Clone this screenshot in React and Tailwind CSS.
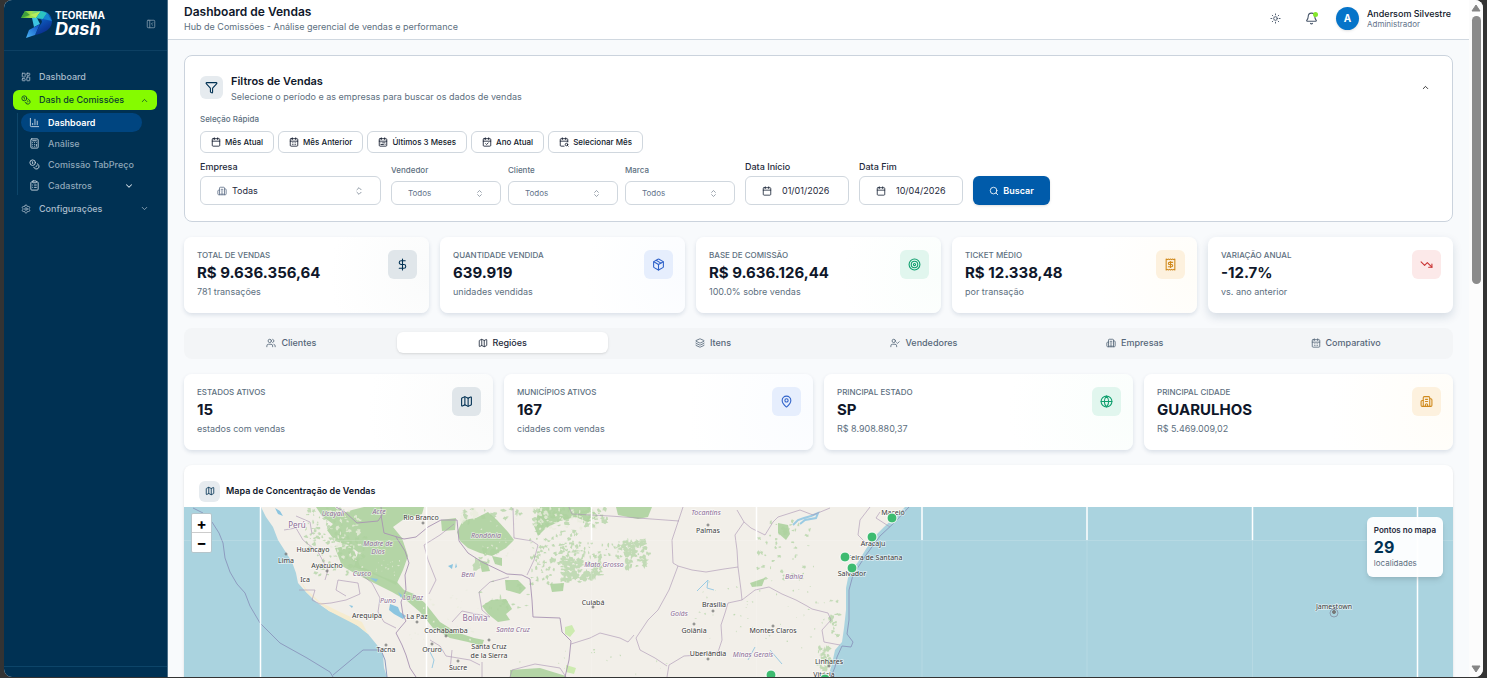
import {
  Building2,
  Calculator,
  Calendar,
  CalendarCheck,
  CalendarDays,
  CalendarRange,
  CalendarSearch,
  ChartColumn,
  ChevronDown,
  ChevronUp,
  ChevronsUpDown,
  ClipboardList,
  Coins,
  DollarSign,
  Funnel,
  Globe,
  Layers,
  LayoutDashboard,
  Map as MapIcon,
  MapPin,
  Package,
  PanelLeftClose,
  Bell,
  Receipt,
  Search,
  Settings,
  Sun,
  Target,
  TrendingDown,
  UserCheck,
  Users,
} from "lucide-react";

const tones = {
  navy: {
    icon: "bg-[#e0e6ea] text-[#003153]",
    card: "bg-[radial-gradient(circle_at_100%_50%,#fafbfb,#ffffff_40%)]",
  },
  blue: {
    icon: "bg-[#e6eefd] text-[#2f62c9]",
    card: "bg-[radial-gradient(circle_at_100%_50%,#fafcff,#ffffff_40%)]",
  },
  green: {
    icon: "bg-[#e1f6ee] text-[#0f9f6e]",
    card: "bg-[radial-gradient(circle_at_100%_50%,#fafefc,#ffffff_40%)]",
  },
  amber: {
    icon: "bg-[#fdf1de] text-[#d08a1d]",
    card: "bg-[radial-gradient(circle_at_100%_50%,#fffdf8,#ffffff_40%)]",
  },
  red: {
    icon: "bg-[#fce9e9] text-[#c93434]",
    card: "bg-white",
  },
};

const salesStats = [
  { label: "TOTAL DE VENDAS", value: "R$ 9.636.356,64", note: "781 transações", icon: DollarSign, tone: "navy" },
  { label: "QUANTIDADE VENDIDA", value: "639.919", note: "unidades vendidas", icon: Package, tone: "blue" },
  { label: "BASE DE COMISSÃO", value: "R$ 9.636.126,44", note: "100.0% sobre vendas", icon: Target, tone: "green" },
  { label: "TICKET MÉDIO", value: "R$ 12.338,48", note: "por transação", icon: Receipt, tone: "amber" },
  { label: "VARIAÇÃO ANUAL", value: "-12.7%", note: "vs. ano anterior", icon: TrendingDown, tone: "red", raised: true },
];

const regionStats = [
  { label: "ESTADOS ATIVOS", value: "15", note: "estados com vendas", icon: MapIcon, tone: "navy" },
  { label: "MUNICÍPIOS ATIVOS", value: "167", note: "cidades com vendas", icon: MapPin, tone: "blue" },
  { label: "PRINCIPAL ESTADO", value: "SP", note: "R$ 8.908.880,37", icon: Globe, tone: "green" },
  { label: "PRINCIPAL CIDADE", value: "GUARULHOS", note: "R$ 5.469.009,02", icon: Building2, tone: "amber" },
];

const quickRanges = [
  { label: "Mês Atual", icon: Calendar },
  { label: "Mês Anterior", icon: CalendarDays },
  { label: "Últimos 3 Meses", icon: CalendarRange },
  { label: "Ano Atual", icon: CalendarCheck },
  { label: "Selecionar Mês", icon: CalendarSearch },
];

const tabs = [
  { label: "Clientes", icon: Users },
  { label: "Regiões", icon: MapIcon, active: true },
  { label: "Itens", icon: Layers },
  { label: "Vendedores", icon: UserCheck },
  { label: "Empresas", icon: Building2 },
  { label: "Comparativo", icon: CalendarDays },
];

function Logo() {
  return (
    <a href="#" aria-label="Teorema Dash" className="flex items-center gap-[3px]">
      <svg width="31" height="28" viewBox="0 0 31 28">
        <defs>
          <linearGradient id="lgTop" x1="0" y1="0" x2="1" y2="0">
            <stop offset="0" stopColor="#3fae3a" />
            <stop offset="0.5" stopColor="#a6e04a" />
            <stop offset="1" stopColor="#35c3b4" />
          </linearGradient>
          <linearGradient id="lgBow" x1="0" y1="0" x2="0.4" y2="1">
            <stop offset="0" stopColor="#22a7d8" />
            <stop offset="0.5" stopColor="#0d55b8" />
            <stop offset="1" stopColor="#0a2e8c" />
          </linearGradient>
          <linearGradient id="lgTail" x1="1" y1="0" x2="0" y2="1">
            <stop offset="0" stopColor="#0a46c0" />
            <stop offset="1" stopColor="#4ab6f5" />
          </linearGradient>
        </defs>
        <path d="M4 1 L20 1 L15 8 L0 8 Z" fill="url(#lgTop)" />
        <path d="M4 1 L9 5 L0 8 Z" fill="#3f9f3c" />
        <path d="M9 5 L20 1 L15 8 Z" fill="#b9ec5c" />
        <path d="M20 1 C27 1 31 6 31 12 C30 20 23 23 14 25 L19 15 C22 12 22 9 15 8 Z" fill="url(#lgBow)" />
        <path d="M20 1 L26 3 L22 9 L15 8 Z" fill="#2cc4c0" />
        <path d="M26 3 L31 11 L22 9 Z" fill="#1583cf" />
        <path d="M11 8 L16 8 L19 14 L13 17 Z" fill="#3cc3e2" />
        <path d="M19 14 L14 25 L5 28 L8 20 Z" fill="url(#lgTail)" />
      </svg>
      <span className="flex flex-col text-white">
        <span className="text-[10px] leading-[10px] font-bold">TEOREMA</span>
        <span className="text-[18px] leading-[18px] font-bold italic">Dash</span>
      </span>
    </a>
  );
}

function SubItem({ icon: Icon, label, active, expandable }) {
  return (
    <li>
      <a
        href="#"
        className={`flex h-[19px] items-center gap-2 rounded-full px-2 ${
          active ? "bg-[#004580] font-semibold text-white" : "font-medium text-[#8fa7b9]"
        }`}
      >
        <Icon size={11} strokeWidth={2} className="shrink-0 text-[#c9d6e0]" />
        <span className="flex-1 whitespace-nowrap">{label}</span>
        {expandable && <ChevronDown size={10} strokeWidth={2.5} className="text-[#d5e0e8]" />}
      </a>
    </li>
  );
}

function Sidebar() {
  return (
    <aside className="flex w-[164px] shrink-0 flex-col border-r border-[#4d7089] bg-[#003153] text-[9px]">
      <div className="flex h-[51px] items-center justify-between border-b border-[#0d4063] pr-[11px] pb-[2px] pl-[17px]">
        <Logo />
        <button aria-label="Recolher menu" className="text-[#7d97aa]">
          <PanelLeftClose size={10} />
        </button>
      </div>

      <nav className="flex-1 pt-4 pr-[10px] pl-[9px]">
        <a href="#" className="flex h-[19px] items-center gap-2 px-2 font-medium text-[#a9bccb]">
          <LayoutDashboard size={10} />
          Dashboard
        </a>
        <button className="mt-1 flex h-5 w-full items-center gap-2 rounded-md bg-[#85fb00] px-2 font-medium text-[#08402f]">
          <Coins size={10} />
          <span className="flex-1 text-left">Dash de Comissões</span>
          <ChevronUp size={9} />
        </button>
        <ul className="mt-[3px] ml-1 flex w-[125px] flex-col gap-[2px] border-l border-[#0d4569] pl-[3px]">
          <SubItem icon={ChartColumn} label="Dashboard" active />
          <SubItem icon={Calculator} label="Análise" />
          <SubItem icon={Coins} label="Comissão TabPreço" />
          <SubItem icon={ClipboardList} label="Cadastros" expandable />
        </ul>
        <button className="mt-1 flex h-[19px] w-full items-center gap-2 px-2 font-medium text-[#a9bccb]">
          <Settings size={10} />
          <span className="flex-1 text-left">Configurações</span>
          <ChevronDown size={9} />
        </button>
      </nav>

      <div className="h-[11px] border-t border-[#0d4569]" />
    </aside>
  );
}

function Header() {
  return (
    <header className="flex h-10 shrink-0 items-center justify-between border-b border-[#d0d8e0] bg-white pr-[18px] pb-[2px] pl-4">
      <div>
        <h1 className="text-[12px] leading-4 font-semibold text-[#0f172a]">Dashboard de Vendas</h1>
        <p className="text-[9px] leading-[14px] text-[#5d6f80]">Hub de Comissões - Análise gerencial de vendas e performance</p>
      </div>
      <div className="flex items-center">
        <button aria-label="Alternar tema" className="mr-6 text-[#475569]">
          <Sun size={11} />
        </button>
        <button aria-label="Notificações" className="relative mr-[18px] text-[#475569]">
          <Bell size={13} />
          <span className="absolute top-0 right-0 size-[5px] rounded-full bg-[#84e72c]" />
        </button>
        <span className="mr-2 flex size-[23px] items-center justify-center rounded-full bg-[#0574c9] text-[10px] font-bold text-white shadow-sm">
          A
        </span>
        <div>
          <p className="text-[9px] leading-[11px] font-medium text-[#0f172a]">Andersom Silvestre</p>
          <p className="text-[8px] leading-[11px] text-[#64748b]">Administrador</p>
        </div>
      </div>
    </header>
  );
}

function SmallSelect({ id, label }) {
  return (
    <div className="flex w-[110px] flex-col gap-1">
      <label htmlFor={id} className="text-[8px] leading-[14px] font-medium text-[#5d6f80]">
        {label}
      </label>
      <div className="flex h-6 items-center rounded-md border border-[#d0d7de] px-4">
        <select id={id} className="flex-1 appearance-none bg-transparent text-[8px] text-[#64748b] outline-none">
          <option>Todos</option>
        </select>
        <ChevronsUpDown size={9} className="pointer-events-none text-[#7b8794]" />
      </div>
    </div>
  );
}

function DateField({ id, label, value }) {
  return (
    <div className="flex w-[104px] flex-col gap-[3px]">
      <label htmlFor={id} className="text-[9px] leading-[12px] font-medium text-[#1e293b]">
        {label}
      </label>
      <div className="flex h-[29px] items-center gap-[10px] rounded-md border border-[#d0d7de] px-4">
        <Calendar size={10} className="shrink-0 text-[#1e293b]" />
        <input id={id} type="text" defaultValue={value} className="w-full min-w-0 bg-transparent text-[9px] text-[#1e293b] outline-none" />
      </div>
    </div>
  );
}

function Filters() {
  return (
    <section className="rounded-lg border border-[#cbd3dd] bg-white px-[15px] pt-[17px] pb-4">
      <div className="flex items-start gap-2">
        <span className="mt-[3px] flex size-[23px] items-center justify-center rounded-md bg-[#e6ebef] text-[#003153]">
          <Funnel size={13} />
        </span>
        <div className="flex-1">
          <h2 className="text-[11px] leading-4 font-semibold text-[#0f172a]">Filtros de Vendas</h2>
          <p className="text-[9px] leading-4 text-[#5d6f80]">Selecione o período e as empresas para buscar os dados de vendas</p>
        </div>
        <button aria-label="Recolher filtros" className="mt-[6px] mr-[3px] p-1">
          <ChevronUp size={9} />
        </button>
      </div>

      <p className="mt-2 text-[8px] leading-[12px] font-medium text-[#5d6f80]">Seleção Rápida</p>
      <div className="mt-[6px] flex flex-wrap gap-1">
        {quickRanges.map(({ label, icon: Icon }) => (
          <button
            key={label}
            className="flex h-[22px] items-center gap-1 rounded-md border border-[#d0d7de] bg-white px-[10px] text-[8px] font-medium text-[#0f172a]"
          >
            <Icon size={10} />
            {label}
          </button>
        ))}
      </div>

      <div className="mt-2 flex flex-wrap items-end gap-[10px]">
        <div className="flex w-[181px] flex-col gap-[3px]">
          <label htmlFor="empresa" className="text-[9px] leading-[12px] font-medium text-[#1e293b]">
            Empresa
          </label>
          <div className="flex h-[29px] items-center gap-[5px] rounded-md border border-[#d0d7de] px-4">
            <Building2 size={10} className="text-[#64748b]" />
            <select id="empresa" className="flex-1 appearance-none bg-transparent text-[9px] text-[#1e293b] outline-none">
              <option>Todas</option>
            </select>
            <ChevronsUpDown size={10} className="pointer-events-none text-[#7b8794]" />
          </div>
        </div>
        <div className="flex gap-[7px]">
          <SmallSelect id="vendedor" label="Vendedor" />
          <SmallSelect id="cliente" label="Cliente" />
          <SmallSelect id="marca" label="Marca" />
        </div>
        <DateField id="data-inicio" label="Data Início" value="01/01/2026" />
        <DateField id="data-fim" label="Data Fim" value="10/04/2026" />
        <button className="flex h-[29px] w-[77px] items-center justify-center gap-1 rounded-md bg-[#005baa] text-[9px] font-semibold text-white shadow-sm">
          <Search size={10} />
          Buscar
        </button>
      </div>
    </section>
  );
}

function StatCard({ label, value, note, icon: Icon, tone, raised }) {
  return (
    <article
      className={`flex justify-between rounded-lg px-3 pt-3 pb-[14px] ${
        raised ? "shadow-[0_4px_10px_rgba(15,50,90,0.15)]" : "shadow-[0_2px_4px_rgba(15,50,90,0.13)]"
      } ${tones[tone].card}`}
    >
      <div className="pl-px">
        <p className="text-[8px] leading-[12px] font-medium text-[#5d6f80]">{label}</p>
        <p className="text-[15px] leading-[24px] font-bold text-[#0f172a]">{value}</p>
        <p className="text-[9px] leading-[14px] text-[#5d6f80]">{note}</p>
      </div>
      <span className={`mt-px flex size-[29px] items-center justify-center rounded-md ${tones[tone].icon}`}>
        <Icon size={13} />
      </span>
    </article>
  );
}

function Tabs() {
  return (
    <div role="tablist" className="grid h-[31px] grid-cols-6 rounded-lg bg-[#f3f5f7] px-[2px] pt-1 pb-[6px]">
      {tabs.map(({ label, icon: Icon, active }) => (
        <button
          key={label}
          role="tab"
          aria-selected={Boolean(active)}
          className={`flex items-center justify-center gap-[5px] rounded-md text-[9px] font-medium ${
            active ? "bg-white text-[#1e293b] shadow-sm" : "text-[#566779]"
          }`}
        >
          <Icon size={10} />
          {label}
        </button>
      ))}
    </div>
  );
}

// small pseudo random generator, keeps the vegetation the same on each render
function randomizer(seed) {
  let s = seed;
  return () => {
    s = (s * 16807) % 2147483647;
    return s / 2147483647;
  };
}

function blob(cx, cy, rx, ry, rand) {
  const n = 12;
  let d = "";
  for (let i = 0; i < n; i++) {
    const a = (i / n) * Math.PI * 2;
    const k = 0.4 + rand() * 0.8;
    d += `${i ? "L" : "M"}${(cx + Math.cos(a) * rx * k).toFixed(1)} ${(cy + Math.sin(a) * ry * k).toFixed(1)}`;
  }
  return d + "Z";
}

function scatter(areas, seed) {
  const rand = randomizer(seed);
  return areas
    .map(([x, y, w, h, count, size]) =>
      Array.from({ length: count }, () =>
        blob(x + rand() * w, y + rand() * h, size * (0.3 + rand()), size * (0.3 + rand()), rand)
      ).join("")
    )
    .join("");
}

// x, y, width, height, amount, size
const woods = scatter(
  [
    [532, 508, 75, 18, 60, 3],
    [530, 530, 50, 55, 110, 2],
    [560, 542, 90, 16, 80, 2],
    [562, 556, 40, 24, 80, 3],
    [624, 540, 22, 28, 50, 3],
    [462, 508, 60, 14, 16, 3],
    [474, 550, 30, 20, 8, 4],
    [480, 580, 50, 30, 24, 2],
    [305, 508, 40, 40, 60, 2],
    [315, 535, 50, 40, 60, 2],
    [755, 520, 60, 60, 50, 2],
    [740, 580, 90, 80, 30, 1],
    [690, 580, 60, 70, 18, 1],
    [830, 600, 10, 40, 20, 2],
    [818, 648, 12, 22, 20, 3],
    [520, 640, 150, 35, 16, 1],
  ],
  4711
);

const clearings = scatter(
  [
    [330, 510, 30, 50, 50, 2],
    [350, 560, 50, 16, 22, 1],
    [400, 590, 80, 50, 40, 1],
    [535, 508, 65, 22, 60, 2],
    [460, 510, 60, 50, 20, 1],
    [460, 508, 16, 12, 10, 3],
  ],
  99
);

const forests = [
  "M316 507 L335 507 L341 514 L352 510 L364 507 L415 507 L424 507 L422 514 L404 519 L393 527 L402 538 L408 556 L403 570 L396 585 L384 579 L368 572 L354 567 L358 552 L348 545 L335 541 L327 530 L333 524 L322 516 Z",
  "M335 548 L352 545 L360 566 L383 577 L397 582 L404 590 L414 594 L425 603 L440 622 L456 632 L474 638 L484 640 L482 646 L468 642 L450 638 L433 628 L420 612 L406 600 L392 592 L372 582 L356 574 L342 566 Z",
  "M463 520 L476 518 L488 512 L497 520 L508 532 L514 540 L506 548 L492 556 L480 553 L468 548 L460 541 L457 532 Z",
  "M540 507 L590 507 L598 516 L588 522 L575 517 L560 521 L546 528 L538 536 L534 526 Z",
  "M616 507 L652 507 L648 517 L638 519 L618 515 Z",
  "M441 520 L456 518 L455 530 L442 531 Z",
  "M491 600 L506 599 L512 609 L506 614 L510 620 L498 622 L488 614 L482 606 Z",
  "M505 580 L518 580 L526 588 L520 594 L506 590 Z",
  "M479 560 L487 562 L490 571 L482 572 Z",
  "M492 556 L502 558 L502 566 L495 564 Z",
  "M778 523 L788 525 L790 534 L786 540 L778 533 Z",
  "M550 584 L564 583 L563 591 L552 592 Z",
  "M510 670 L540 668 L566 676 L566 690 L510 690 Z",
  "M750 583 L765 578 L762 586 L752 587 Z",
];

const borders = [
  "M336 507 L345 512 L357 523 L378 521 L382 515 L381 507 M381 515 L384 533 L404 539 L416 537 L428 527 L441 520 L457 520 L459 541 L468 553 L482 562 L507 574 L522 575 L530 579 L532 600 L533 617 L560 618 L562 632 L571 641 L569 660 L565 677",
  "M396 537 L405 551 L409 563 L405 575 L406 590 L401 602 L403 615 L406 621 L400 628 L396 633 L402 645 L406 655 L410 668 L416 677",
  "M513 508 L514 538 L532 541 L538 545 L534 560 L527 575",
  "M569 507 L572 514 L610 516 L679 521",
  "M683 507 L677 525 L672 540 L673 563 L678 566 L692 570 L706 572 L724 569 L738 567 L737 550 L735 535 L744 522 L737 510 M738 567 L741 590 L742 600 L728 603 L725 613 L721 625 L722 640 L718 652 L700 655 L684 656 L669 665 L667 677",
  "M742 600 L755 590 L769 587 L782 594 L796 600 L807 606 L812 609 L828 613 L831 620 L822 630 L824 642 L840 645",
  "M744 522 L751 528 L765 535 L773 522 L778 517 L800 510 L813 515 L830 508",
  "M678 566 L669 590 L658 610 L648 620 L636 638 L640 650 L655 658 L667 666",
  "M571 644 L590 638 L600 633 L620 638 L628 642 L634 635",
  "M870 507 L860 520 L858 535 L868 545 M880 512 L876 518 L890 527",
  "M299 590 L315 590 L312 600 L320 604 L331 603 L346 600 L360 594 L358 583 L338 580 L336 590 L346 596",
  "M362 575 L372 583 L380 598 L378 612 L384 622 L396 628",
  "M284 530 L296 528 L303 540 L318 552 M296 516 L310 522 L312 534 M318 552 L328 570 L325 580",
  "M429 594 L436 580 L428 560 L424 545 L440 535 L454 524",
  "M509 577 L490 582 L479 592 L482 610 L490 617 L462 611 L452 622",
  "M430 640 L440 646 L446 656 L470 660 L480 665 M452 650 L450 670 M482 662 L482 677",
  "M510 677 L512 670 L535 664 L560 668 L566 677",
];

const cities = [
  ["Rio Branco", 421, 520, 423, 523],
  ["Huancayo", 313, 552],
  ["Lima", 286, 563, 286, 554],
  ["Ayacucho", 327, 568, 327, 571],
  ["Ica", 305, 582],
  ["Arequipa", 367, 618],
  ["La Paz", 417, 619, 417, 622],
  ["Cochabamba", 446, 633, 446, 636],
  ["Tacna", 386, 652, 386, 645],
  ["Oruro", 432, 652, 432, 644],
  ["Santa Cruz", 489, 649, 489, 640],
  ["de la Sierra", 489, 658],
  ["Sucre", 458, 670, 458, 661],
  ["Palmas", 708, 533, 708, 525],
  ["Cuiabá", 593, 605, 593, 607],
  ["Brasília", 714, 607, 713, 611],
  ["Goiânia", 694, 633, 694, 624],
  ["Montes Claros", 773, 633, 773, 626],
  ["Uberlândia", 708, 656, 708, 659],
  ["Maceió", 893, 515],
  ["Aracaju", 873, 546],
  ["Feira de Santana", 875, 560],
  ["Salvador", 852, 576],
  ["Linhares", 829, 664, 829, 666],
  ["Vitória", 824, 677],
  ["Jamestown", 1334, 609],
];

const states = [
  ["Ucayali", 333, 516],
  ["Acre", 379, 514],
  ["Madre de", 378, 546],
  ["Dios", 378, 554],
  ["Cusco", 362, 576],
  ["Puno", 388, 603],
  ["La Paz", 413, 600],
  ["Beni", 468, 577],
  ["Rondônia", 486, 538],
  ["Santa Cruz", 513, 632],
  ["Mato Grosso", 604, 567],
  ["Tocantins", 706, 515],
  ["Goiás", 679, 616],
  ["Bahia", 794, 579],
  ["Minas Gerais", 753, 657],
];

const salesPoints = [
  [892, 518],
  [872, 537],
  [845, 557],
  [852, 568],
  [771, 675],
  [825, 679],
];

function SalesMap() {
  return (
    <svg
      viewBox="184 507 1269 400"
      preserveAspectRatio="xMidYMin slice"
      className="block h-[400px] w-full bg-[#aad3df]"
      role="img"
      aria-label="Mapa de vendas por localidade"
    >
      <path
        d="M261 507 L266 517 L273 527 L278 540 L285 551 L292 562 L296 573 L298 583 L306 592 L316 602 L329 611 L346 618 L358 626 L368 634 L377 645 L383 655 L384 668 L388 680 L392 907 L700 907 L780 740 L825 690 L828 677 L832 664 L835 650 L842 642 L844 628 L846 610 L846 588 L848 578 L852 570 L858 562 L866 549 L874 537 L884 527 L895 517 L905 507 Z"
        fill="#f2efe9"
      />
      <g fill="#add19e">
        {forests.map((d) => (
          <path key={d} d={d} fillOpacity="0.9" />
        ))}
        <path d={woods} fillOpacity="0.7" />
      </g>
      <path d={clearings} fill="#e9ecdc" fillOpacity="0.8" />
      <path d="M299 578 L306 592 L329 611 L358 626 L368 634 L362 622 L340 612 L320 602 L306 589 Z" fill="#f6ecd0" />
      <path d="M565 627 L572 625 L575 631 L570 637 L565 634 Z M566 665 L576 668 L574 674 L566 672 Z" fill="#cdebb0" />
      <g fill="#8cc5e0">
        <path d="M390 604 L398 607 L400 612 L406 616 L403 619 L394 614 L389 610 Z" />
        <path d="M275 508 L280 511 L283 516 L278 514 Z M370 578 L378 579 L376 582 Z M398 592 L402 595 L401 598 Z" />
        <path d="M349 605 L353 606 L352 608 Z M448 566 L453 564 L452 569 Z M456 563 L457 567 L455 568 Z" />
      </g>
      <g fill="none" stroke="#9bcbe3" strokeWidth="1">
        <path d="M793 525 L798 520 L804 518 L811 516 L818 513 L816 518 L805 520 L800 524" strokeWidth="2" />
        <path d="M697 591 L702 586 L708 580 L707 588 L714 590 M430 652 L434 660 L432 668 M770 650 L782 664 M755 647 L748 660" />
      </g>

      <g fill="none" stroke="#a893b3" strokeWidth="1" strokeLinejoin="round">
        {borders.map((d, i) => (
          <path key={d} d={d} strokeOpacity={i < 2 ? 0.9 : 0.6} />
        ))}
      </g>
      <g fill="none" stroke="#8d9cc0" strokeWidth="1">
        <path d="M193 508 L203 513 L212 522 L219 533 L223 543 L225 558 L230 572 L237 584 L245 593 L250 606 L260 623 L280 643 L307 658 L330 672 L333 677 M333 675 L363 650 L381 650 L385 660 L387 677" />
        <path d="M909 507 L895 522 L880 536 L866 555 L853 575 L849 590 L849 620 L847 634 L853 642 L851 647 L842 646 L837 657 L835 667 L831 677" />
      </g>

      <g stroke="#ffffff" strokeWidth="1">
        <path d="M260.500 507V907M426.500 507V907M1417.500 507V907" strokeWidth="1.500" />
        <path d="M591.500 507V540M756.500 507V540M922 507V540M1087 507V540M1252.500 507V540" strokeWidth="1.500" />
        <path d="M184 540.500H1453M591.500 540V907M756.500 540V907M922 540V907M1087 540V907M1252.500 540V907" strokeOpacity="0.15" />
      </g>

      <g
        fontFamily="'Noto Sans', sans-serif"
        fontSize="7"
        textAnchor="middle"
        stroke="#ffffff"
        strokeOpacity="0.6"
        strokeWidth="1.500"
        paintOrder="stroke"
      >
        {cities.map(([name, x, y]) => (
          <text key={name + y} x={x} y={y} fill="#3a3a3a">
            {name}
          </text>
        ))}
        {states.map(([name, x, y]) => (
          <text key={name + y} x={x} y={y} fontStyle="italic" fill="#8c6d96">
            {name}
          </text>
        ))}
        <text x="297" y="528" fontSize="8" fill="#8c6d96">Perú</text>
        <text x="475" y="621" fontSize="8" fill="#8c6d96">Bolivia</text>
      </g>
      <g fill="none" stroke="#777777" strokeWidth="1">
        {cities
          .filter((c) => c.length > 3)
          .map(([name, , , dx, dy]) => (
            <circle key={name} cx={dx} cy={dy} r="1" />
          ))}
        <circle cx="1334" cy="613" r="4" stroke="#8d9cb0" />
        <circle cx="1334" cy="612" r="1.500" fill="#777777" />
      </g>

      {salesPoints.map(([x, y]) => (
        <circle key={x} cx={x} cy={y} r="5" fill="#3dbb70" stroke="#ffffff" strokeWidth="1" />
      ))}
    </svg>
  );
}

function MapCard() {
  return (
    <section className="overflow-hidden rounded-t-lg bg-white shadow-sm">
      <div className="flex h-[42px] items-center gap-[6px] px-[15px] pt-[10px]">
        <span className="flex size-[21px] items-center justify-center rounded-md bg-[#e6ebef] text-[#003153]">
          <MapIcon size={10} />
        </span>
        <h2 className="text-[9px] font-semibold text-[#0f172a]">Mapa de Concentração de Vendas</h2>
      </div>
      <div className="relative">
        <SalesMap />
        <div className="absolute top-[6px] left-[7px] flex flex-col overflow-hidden rounded-xs border border-[#b5c5cb] bg-white text-[15px] font-bold text-black">
          <button aria-label="Aproximar" className="h-[19px] w-[19px] border-b border-[#cccccc] leading-[17px]">
            +
          </button>
          <button aria-label="Afastar" className="h-[19px] w-[19px] leading-[17px]">
            −
          </button>
        </div>
        <div className="absolute top-[10px] right-[10px] rounded-md bg-white/95 px-[7px] pt-[7px] pb-[9px] shadow-md">
          <p className="text-[8px] leading-[12px] font-semibold text-[#1e293b]">Pontos no mapa</p>
          <p className="text-[16px] leading-[22px] font-bold text-[#003153]">29</p>
          <p className="text-[8px] leading-[10px] text-[#5d6f80]">localidades</p>
        </div>
      </div>
    </section>
  );
}

function Scrollbar() {
  return (
    <div aria-hidden="true" className="flex w-[14px] shrink-0 flex-col items-center bg-[#fcfcfc] py-1">
      <svg width="10" height="8" viewBox="0 0 10 8">
        <path d="M5 1 L9 7 H1 Z" fill="#858585" stroke="#858585" strokeLinejoin="round" />
      </svg>
      <div className="mt-1 h-2/5 w-[9px] rounded-full bg-[#8b8b8b]" />
      <svg width="10" height="8" viewBox="0 0 10 8" className="mt-auto">
        <path d="M5 7 L9 1 H1 Z" fill="#858585" stroke="#858585" strokeLinejoin="round" />
      </svg>
    </div>
  );
}

export default function App() {
  return (
    <div className="h-screen bg-[#333333] px-1 pb-px font-['Inter',sans-serif]">
      <div className="flex h-full overflow-hidden rounded-lg bg-[#f8fafc]">
        <Sidebar />
        <div className="flex min-w-0 flex-1 flex-col">
          <Header />
          <main className="flex min-h-0 flex-1 flex-col gap-[15px] overflow-hidden px-4 pt-[15px] *:shrink-0">
            <Filters />
            <div className="grid grid-cols-5 gap-[11px]">
              {salesStats.map((stat) => (
                <StatCard key={stat.label} {...stat} />
              ))}
            </div>
            <Tabs />
            <div className="grid grid-cols-4 gap-[11px]">
              {regionStats.map((stat) => (
                <StatCard key={stat.label} {...stat} />
              ))}
            </div>
            <MapCard />
          </main>
        </div>
        <Scrollbar />
      </div>
    </div>
  );
}
